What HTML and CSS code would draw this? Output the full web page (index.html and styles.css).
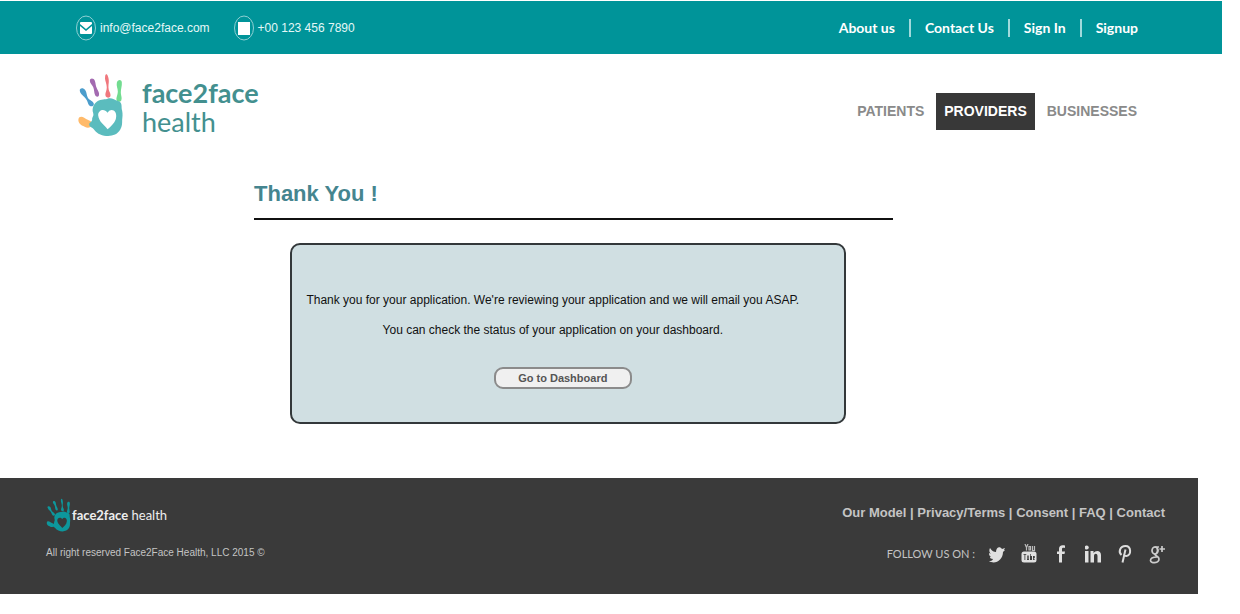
FILE: index.html
```html
<!DOCTYPE html>
<html lang="en">
<head>
<meta charset="utf-8">
<title>face2face health - Thank You</title>
<link rel="stylesheet" href="styles.css">
</head>
<body>
<svg width="0" height="0" class="symbols" aria-hidden="true">
  <symbol id="hand" viewBox="50 40 140 192">
    <path class="finger-index" d="M58 94c-2-9 10-11 16-3 5 7 4 16 8 23 5 8 16 9 18 18 1 8-10 11-15 4-4-6-3-12-9-19-6-8-16-13-18-23z"/>
    <path class="finger-middle" d="M88 63c0-9 12-9 15 0 3 9 2 15 6 23 3 8 9 13 6 22-2 5-9 4-11-1-4-9-2-16-6-25-3-7-10-11-10-19z"/>
    <path class="finger-ring" d="M134 49c1-7 6-7 8 0 3 9 4 15 2 26-1 12 1 17 5 26 3 9 0 13-6 13s-10-5-8-13c3-10 5-15 3-25-2-11-6-16-4-27z"/>
    <path class="finger-little" d="M169 69c2-10 14-11 15-1 1 12-3 19-3 30 0 10 5 17 1 25-3 5-12 4-14-2-2-8 4-15 4-25 0-11-5-17-3-27z"/>
    <path class="finger-thumb" d="M54 178c1-8 10-9 17-4 7 6 18 7 23 14l-4 14c-10 5-17-1-24-4-8-3-14-12-12-20z"/>
    <path class="palm" fill-rule="evenodd" d="M107 128c10-11 23-7 34-11 13-4 20 4 32 7 15 6 8 18 12 29 2 10 1 18 0 27 0 12 0 20-6 30-8 14-21 17-36 19-16 0-33-6-42-19-6-8-16-8-15-16 0-6 8-7 9-13-1-9 6-11 3-21-4-11 0-24 9-32zm34 81c10-10 25-20 26-38 2-17-14-28-26-12-10-14-28-8-28 8 2 20 18 28 28 42z"/>
  </symbol>
</svg>

<header>
  <div class="topbar">
    <div class="contacts">
      <a class="contact" href="mailto:info@face2face.com">
        <svg class="contact-icon" viewBox="0 0 20 26" aria-hidden="true">
          <ellipse cx="10" cy="13" rx="9.500" ry="12" fill="none" stroke="#8fd0d3"/>
          <path fill="#fff" d="M5 7h10q1 0 1 1v1l-6 5-6-5V8q0-1 1-1zm-1 4 6 5 6-5v7q0 1-1 1H5q-1 0-1-1z"/>
        </svg>
        <span>info@face2face.com</span>
      </a>
      <a class="contact" href="tel:+001234567890">
        <svg class="contact-icon" viewBox="0 0 20 26" aria-hidden="true">
          <ellipse cx="10" cy="13" rx="9.500" ry="12" fill="none" stroke="#8fd0d3"/>
          <rect x="4" y="7" width="12" height="13" fill="#fff"/>
        </svg>
        <span>+00 123 456 7890</span>
      </a>
    </div>
    <nav class="account" aria-label="Account">
      <a href="#">About us</a><i></i>
      <a href="#">Contact Us</a><i></i>
      <a href="#">Sign In</a><i></i>
      <a href="#">Signup</a>
    </nav>
  </div>
  <div class="masthead">
    <a class="brand" href="#">
      <svg class="brand-hand"><use href="#hand"/></svg>
      <span class="brand-name"><b>face2face</b><span>health</span></span>
    </a>
    <nav class="sections" aria-label="Sections">
      <a href="#">PATIENTS</a>
      <a class="current" href="#">PROVIDERS</a>
      <a href="#">BUSINESSES</a>
    </nav>
  </div>
</header>

<main>
  <h1>Thank You !</h1>
  <section class="notice">
    <p>Thank you for your application. We're reviewing your application and we will email you ASAP.</p>
    <p>You can check the status of your application on your dashboard.</p>
    <button type="button">Go to Dashboard</button>
  </section>
</main>

<footer>
  <div class="legal">
    <a class="footer-brand" href="#">
      <svg class="footer-hand"><use href="#hand"/></svg>
      <span><b>face2face</b> health</span>
    </a>
    <p>All right reserved Face2Face Health, LLC 2015 ©</p>
  </div>
  <div class="footer-right">
    <nav class="footer-links" aria-label="Footer"><a href="#">Our Model</a> | <a href="#">Privacy/Terms</a> | <a href="#">Consent</a> | <a href="#">FAQ</a> | <a href="#">Contact</a></nav>
    <div class="social">
      <span>FOLLOW US ON :</span>
      <a href="#" aria-label="Twitter"><svg viewBox="0 0 16 20"><path d="M1 4c2 3 4 4 6 4 0-5 4-6 6-3l3-1-1 2 1 0-2 2c0 8-8 13-14 9 2 0 3 0 4-2-2 0-3-1-3-2h1C0 12 0 10 0 9l2 1C0 8 0 6 1 4z"/></svg></a>
      <a href="#" aria-label="YouTube"><svg viewBox="0 0 16 20"><path d="M4 0l1.500 3.500v3M7 0 5.500 3.500M8 2.500h1.500v3.500H8zM11.500 2v4.500h2V2" fill="none" stroke="#bbb" stroke-width="1.200"/><path fill-rule="evenodd" d="M3 7.500h10q2.500 0 2.500 2.500v6q0 2.500-2.500 2.500H3Q.5 18.500.5 16v-6Q.5 7.500 3 7.500zM2.500 10v.8h1V16h.8v-5.200h1V10zM6 11.500V16h2v-4.500h-.7v3.700h-.6v-3.700zM9 10v6h2v-4H9.700v-2zm3 2v4h1.800v-.8h-1v-1h1V12z"/></svg></a>
      <a href="#" aria-label="Facebook"><svg viewBox="0 0 16 20"><path d="M6 18.500V10H4V7.500h2V5c0-3 2-4.500 6-3.500V4c-2-.5-3 0-3 1v2.500h3l-.5 2.500H9v8.500z"/></svg></a>
      <a href="#" aria-label="LinkedIn"><svg viewBox="0 0 16 20"><path d="M0 7h3.500v11.500H0zM5.500 7h3v2C10.500 6 16 6 16 11v7.500h-3.500V12c0-3-3.500-3-3.500 0v6.500H5.500z"/><circle cx="1.750" cy="3.500" r="2"/></svg></a>
      <a href="#" aria-label="Pinterest"><svg viewBox="0 0 16 20"><path d="M4.500 11C1 8 3 2 8.500 2c6 0 6 9.500 1 10-1.500 0-2.500-.5-2.500-1.500M8.500 5.500 5.500 18.500" fill="none" stroke="#ddd" stroke-width="2"/></svg></a>
      <a href="#" aria-label="Google Plus"><svg viewBox="0 0 16 20"><g fill="none" stroke="#ccc" stroke-width="1.700"><ellipse cx="6" cy="6.500" rx="3" ry="3.500"/><path d="M5.500 3H10M8 4c1.500 3 0 5-2 6.500 1 2 4 2 4 4.500 0 4.500-8.500 4.500-8.500 1.500 0-3 3.500-3.500 6.500-3.500M13 2v6M10.500 5H16"/></g></svg></a>
    </div>
  </div>
</footer>
</body>
</html>
```
FILE: styles.css
```css
* { box-sizing: border-box; }
body {
  margin: 0;
  padding-top: 1px;
  background: #fff;
  color: #111;
  font: 12px/14px "Liberation Sans", Arial, sans-serif;
}
a { color: inherit; text-decoration: none; }
p, h1 { margin: 0; }
.symbols { position: absolute; }

.topbar {
  display: flex;
  justify-content: space-between;
  align-items: center;
  height: 53px;
  margin-right: 18px;
  padding: 0 84px 0 76px;
  background: #009499;
  color: #fff;
}
.contacts { display: flex; gap: 24px; }
.contact {
  display: flex;
  align-items: center;
  gap: 4px;
  color: #e4f8f8;
  font: 12px/20px "Liberation Sans", Arial, sans-serif;
}
.contact-icon { width: 20px; height: 26px; }
.account {
  display: flex;
  align-items: center;
  gap: 14px;
  font: bold 14px/20px Lato, sans-serif;
}
.account i { width: 2px; height: 18px; background: #a0dadc; }

.masthead {
  display: flex;
  justify-content: space-between;
  align-items: flex-start;
  padding: 19px 94px 0 77px;
}
.brand { display: flex; gap: 18px; color: #43908f; }
.brand-hand { width: 47px; height: 64px; }
.brand-name {
  display: flex;
  flex-direction: column;
  font: 27px/29px Lato, sans-serif;
  padding-top: 5px;
}
.finger-index { fill: var(--hand, #4b9dcc); }
.finger-middle { fill: var(--hand, #a36ab0); }
.finger-ring { fill: var(--hand, #f0777d); }
.finger-little { fill: var(--hand, #72dc90); }
.finger-thumb { fill: var(--hand, #ffba6a); }
.palm { fill: var(--hand, #5bbcbe); }
.sections {
  display: flex;
  gap: 4px;
  padding-top: 20px;
  color: #8a8a8a;
  font: bold 14px/37px "Liberation Sans", Arial, sans-serif;
}
.sections a { padding: 0 8px; }
.sections a:last-child { padding-right: 9px; }
.sections .current { background: #383838; color: #fff; }

main { width: 51.5%; margin-left: 254px; padding-top: 42px; }
h1 {
  padding-bottom: 9px;
  border-bottom: 2px solid #111;
  color: #45858f;
  font: bold 22px/30px "Liberation Sans", Arial, sans-serif;
}
.notice {
  display: flex;
  flex-direction: column;
  align-items: center;
  margin: 23px 47px 0 36px;
  padding: 48px 30px 33px 0;
  border: 2px solid #33383a;
  border-radius: 10px;
  background: #d0dfe2;
}
.notice p { margin-bottom: 16px; }
.notice button {
  width: 138px;
  height: 22px;
  margin: 14px 0 0 20px;
  padding: 0;
  border: 2px solid #8b8b8b;
  border-radius: 9px;
  background: #f0f0f0;
  color: #555;
  font: bold 11px/16px "Liberation Sans", Arial, sans-serif;
}

footer {
  display: flex;
  justify-content: space-between;
  margin: 54px 42px 0 0;
  padding: 20px 33px 30px 46px;
  background: #3a3a3a;
  color: #c4c4c4;
}
.footer-brand {
  display: flex;
  align-items: center;
  gap: 1px;
  color: #eee;
  font: 13px/20px Lato, sans-serif;
}
.footer-hand { --hand: #0d979c; width: 25px; height: 34px; }
.legal p { margin-top: 14px; font-size: 10px; }
.footer-right {
  display: flex;
  flex-direction: column;
  align-items: flex-end;
  gap: 22px;
  padding-top: 6px;
}
.footer-links { font: bold 13px/18px "Liberation Sans", Arial, sans-serif; }
.social { display: flex; align-items: center; gap: 16px; }
.social span { margin-right: -2px; font: 11px/18px Lato, sans-serif; }
.social a { display: flex; }
.social svg { width: 16px; height: 20px; fill: #e0e0e0; }
```
